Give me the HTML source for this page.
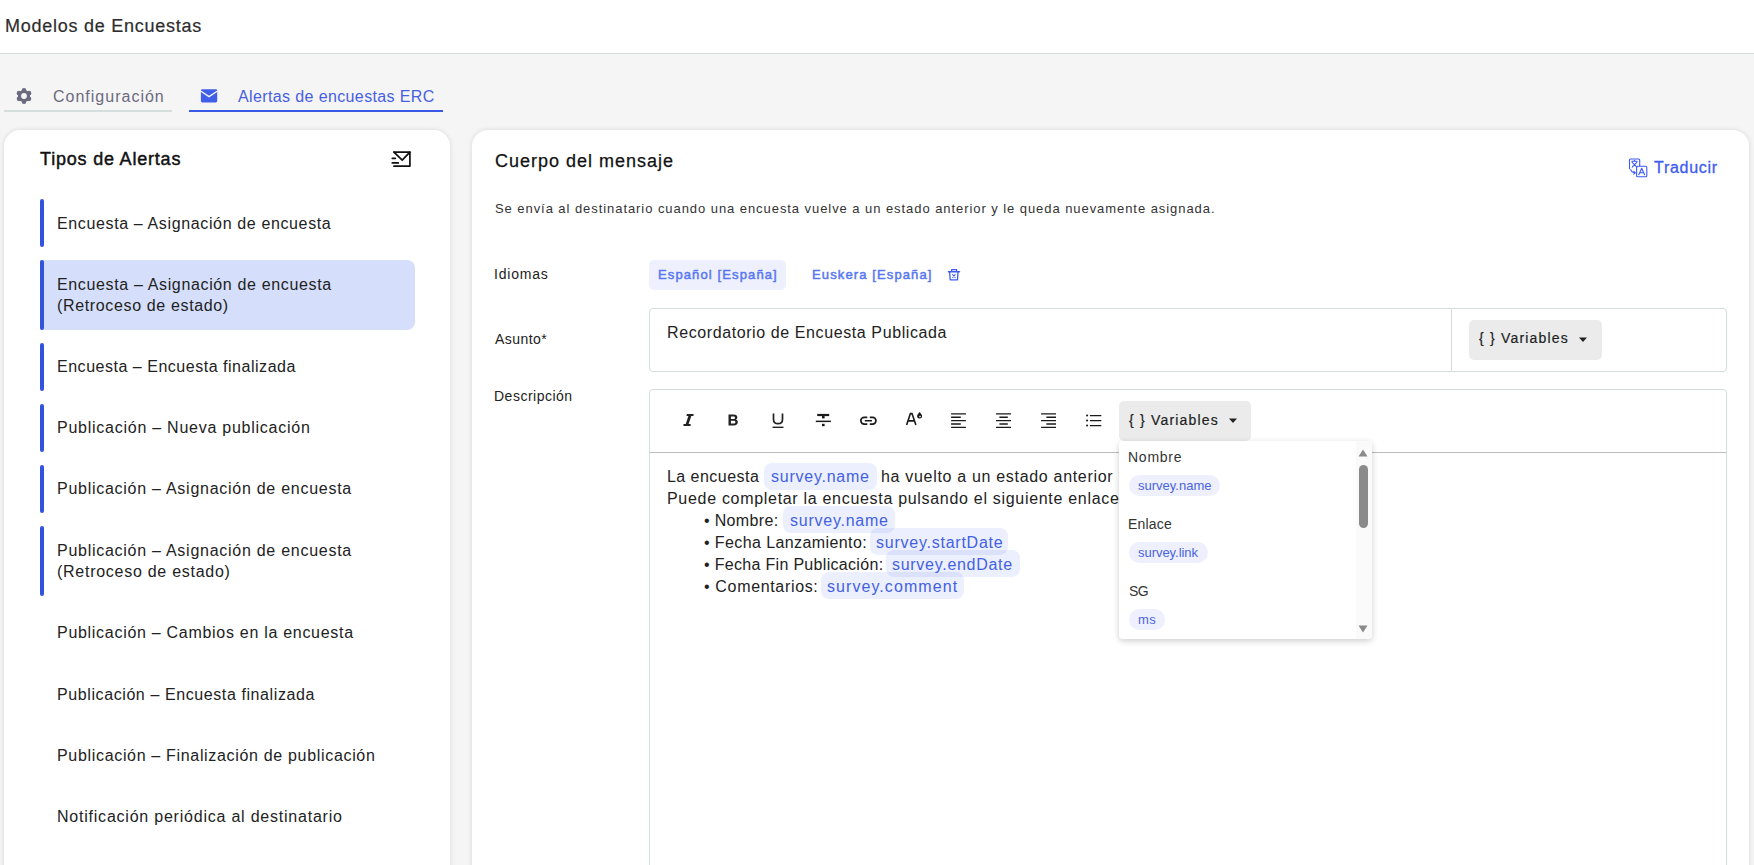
<!DOCTYPE html>
<html lang="es">
<head>
<meta charset="utf-8">
<title>Modelos de Encuestas</title>
<style>
*{box-sizing:border-box;margin:0;padding:0}
html,body{width:1754px;height:865px;overflow:hidden}
body{background:#f5f5f5;font-family:"Liberation Sans",sans-serif;position:relative;color:#222}
.a{position:absolute;white-space:nowrap}
#hdr{position:absolute;left:0;top:0;width:1754px;height:54px;background:#fff;border-bottom:1px solid #d3dcdc}
#title{left:5px;top:15px;font-size:18px;color:#2d2d2d;line-height:22px}
.tabline{position:absolute;height:2px;top:110px}
.card{position:absolute;background:#fff;border-radius:16px;box-shadow:0 0 5px rgba(0,0,0,.12)}
.item{position:absolute;left:40px;width:375px;border-radius:0 8px 8px 0}
.item .bar{position:absolute;left:0;top:0;bottom:0;width:4px;background:#3453db;border-radius:3px}
.item .t{position:absolute;left:17px;font-size:16px;color:#222;line-height:21px;white-space:nowrap}
.sel{background:#d5dffb}
.lbl{font-size:14px;color:#222}
.chip{position:absolute;background:rgba(98,122,240,.12);border-radius:8px}
.ct{color:#4361e4}
.tb svg{position:absolute}
</style>
</head>
<body>
<div id="hdr"></div>
<div class="a" id="title" style="letter-spacing:0.75px;-webkit-text-stroke:0.2px #2d2d2d">Modelos de Encuestas</div>

<!-- tabs -->
<svg class="a" style="left:14px;top:84px" width="20" height="24" viewBox="-10 -12 20 24"><g fill="#6c6a7e"><circle cx="0" cy="0" r="6.1"/><circle cx="0.00" cy="-5.75" r="2.3"/><circle cx="4.98" cy="-2.87" r="2.3"/><circle cx="4.98" cy="2.87" r="2.3"/><circle cx="0.00" cy="5.75" r="2.3"/><circle cx="-4.98" cy="2.87" r="2.3"/><circle cx="-4.98" cy="-2.87" r="2.3"/></g><circle cx="0" cy="0" r="2.9" fill="#f5f5f5"/></svg>
<div class="a" style="left:53px;top:87px;font-size:16px;color:#6c6a7e;line-height:19px;letter-spacing:1.0px">Configuración</div>
<div class="tabline" style="left:4px;width:168px;background:#d6dddd"></div>
<svg class="a" style="left:199px;top:87px" width="21" height="18" viewBox="0 0 21 18"><rect x="1.9" y="2.3" width="16.3" height="13.2" rx="1.4" fill="#3f5fe8"/><path d="M1.6 4 10.05 9.6 18.5 4" fill="none" stroke="#f5f5f5" stroke-width="1.35"/></svg>
<div class="a" style="left:238px;top:87px;font-size:16px;color:#4660e2;line-height:19px;letter-spacing:0.378px">Alertas de encuestas ERC</div>
<div class="tabline" style="left:189px;width:254px;background:#3a58e6"></div>

<!-- left card -->
<div class="card" style="left:4px;top:130px;width:446px;height:760px"></div>
<div class="a" style="left:40px;top:148px;font-size:18px;color:#111;line-height:22px;letter-spacing:0.8px;-webkit-text-stroke:0.45px #111">Tipos de Alertas</div>
<svg class="a" style="left:388px;top:146px" width="26" height="26" viewBox="0 0 26 26"><g fill="none" stroke="#111" stroke-width="1.7" stroke-linecap="round" stroke-linejoin="round"><path d="M5.9 6.1H21.9V20.1H5.9"/><path d="M5.9 6.1 14.2 14.1 21.9 6.1"/><path d="M4.3 12.3H7.3M4.3 16.9H10.3"/></g></svg>

<div class="item" style="top:199px;height:48px"><div class="bar"></div><div class="t" style="top:14px;letter-spacing:0.632px">Encuesta – Asignación de encuesta</div></div>
<div class="item sel" style="top:260px;height:70px"><div class="bar"></div><div class="t" style="top:14px;letter-spacing:0.644px">Encuesta – Asignación de encuesta<br>(Retroceso de estado)</div></div>
<div class="item" style="top:343px;height:48px"><div class="bar"></div><div class="t" style="top:13px;letter-spacing:0.521px">Encuesta – Encuesta finalizada</div></div>
<div class="item" style="top:404px;height:48px"><div class="bar"></div><div class="t" style="top:13px;letter-spacing:0.747px">Publicación – Nueva publicación</div></div>
<div class="item" style="top:465px;height:48px"><div class="bar"></div><div class="t" style="top:13px;letter-spacing:0.731px">Publicación – Asignación de encuesta</div></div>
<div class="item" style="top:526px;height:70px"><div class="bar"></div><div class="t" style="top:14px;letter-spacing:0.731px">Publicación – Asignación de encuesta<br>(Retroceso de estado)</div></div>
<div class="item" style="top:609px;height:48px"><div class="t" style="top:13px;letter-spacing:0.709px">Publicación – Cambios en la encuesta</div></div>
<div class="item" style="top:670px;height:48px"><div class="t" style="top:14px;letter-spacing:0.594px">Publicación – Encuesta finalizada</div></div>
<div class="item" style="top:731px;height:48px"><div class="t" style="top:14px;letter-spacing:0.675px">Publicación – Finalización de publicación</div></div>
<div class="item" style="top:792px;height:48px"><div class="t" style="top:14px;letter-spacing:0.778px">Notificación periódica al destinatario</div></div>

<!-- right card -->
<div class="card" style="left:472px;top:130px;width:1277px;height:760px"></div>

<div class="a" style="left:495px;top:151px;font-size:18px;color:#111;line-height:20px;letter-spacing:1.0px;-webkit-text-stroke:0.25px #111">Cuerpo del mensaje</div>
<svg class="a" style="left:1627px;top:157px" width="22" height="22" viewBox="0 0 22 22"><g fill="none" stroke="#3d5af1" stroke-width="1.1" stroke-linecap="round" stroke-linejoin="round"><path d="M2.5 11.8V3a1 1 0 0 1 1-1h8.2a1 1 0 0 1 1 1v6"/><rect x="9.6" y="9.3" width="10.2" height="10.5" rx="1" fill="#fff"/><path d="M11.8 17.8 14.7 11.3 17.6 17.8M12.7 15.8h4"/><path d="M4.8 4.3h5.4M7.5 3.3v1M5.2 5.3l4.6 4.8M9.8 5.3 5.2 10.1"/><path d="M3.8 12.6c.4 2 1.9 3 4.4 3.2M6.8 14.3l1.6 1.5-1.6 1.4"/></g></svg>
<div class="a" style="left:1654px;top:158px;font-size:16px;color:#3d5af1;line-height:19px;letter-spacing:0.72px;-webkit-text-stroke:0.3px #3d5af1">Traducir</div>
<div class="a" style="left:495px;top:201px;font-size:13px;color:#333;line-height:15px;letter-spacing:0.937px">Se envía al destinatario cuando una encuesta vuelve a un estado anterior y le queda nuevamente asignada.</div>

<div class="a lbl" style="left:494px;top:266px;line-height:16px;letter-spacing:0.783px">Idiomas</div>
<div class="a" style="left:649px;top:260px;width:137px;height:30px;background:#eef0fd;border-radius:5px"></div>
<div class="a" style="left:658px;top:267px;font-size:13px;color:#5877f2;line-height:16px;letter-spacing:1.12px;-webkit-text-stroke:0.5px #5877f2">Español [España]</div>
<div class="a" style="left:812px;top:267px;font-size:13px;color:#5877f2;line-height:16px;letter-spacing:1.12px;-webkit-text-stroke:0.5px #5877f2">Euskera [España]</div>
<svg class="a" style="left:942px;top:264px" width="24" height="22" viewBox="0 0 24 22"><g fill="none" stroke="#3d5af1" stroke-linecap="round" stroke-linejoin="round"><path d="M9.6 7.3V5.6H14.6V7.3" stroke-width="1.2"/><path d="M6.4 7.7H17.5" stroke-width="1.5"/><path d="M7.6 8 8.2 15.8H15.5L16 8" stroke-width="1.3"/><path d="M10.7 10.7 13.1 13.3M13.1 10.7 10.7 13.3" stroke-width="1.1"/></g></svg>

<div class="a lbl" style="left:495px;top:331px;line-height:16px;letter-spacing:0.45px">Asunto*</div>
<div class="a" style="left:649px;top:308px;width:1078px;height:64px;border:1px solid #d3dcdc;border-radius:4px;background:#fff"></div>
<div class="a" style="left:1451px;top:309px;width:1px;height:62px;background:#d3dcdc"></div>
<div class="a" style="left:667px;top:323px;font-size:16px;color:#222;line-height:19px;letter-spacing:0.597px">Recordatorio de Encuesta Publicada</div>
<div class="a" style="left:1469px;top:320px;width:133px;height:40px;background:#ebebeb;border-radius:5px"></div>
<div class="a" style="left:1479px;top:330px;font-size:14px;color:#222;line-height:17px;letter-spacing:1.2px;-webkit-text-stroke:0.2px #222">{ } Variables</div>
<svg class="a" style="left:1578px;top:337px" width="10" height="6" viewBox="0 0 10 6"><path d="M1 .5h8L5 5z" fill="#222"/></svg>

<div class="a lbl" style="left:494px;top:388px;line-height:16px;letter-spacing:0.5px">Descripción</div>
<div class="a" style="left:649px;top:389px;width:1078px;height:520px;border:1px solid #d3dcdc;border-radius:4px;background:#fff"></div>
<div class="a" style="left:650px;top:452px;width:1076px;height:1px;background:#bdbdbd"></div>

<!-- toolbar -->
<svg class="a" style="left:682px;top:413px" width="13" height="14" viewBox="0 0 13 14"><path d="M5 1h6.5v2H9.3L6.6 11h2v2H1.5v-2h2.2L6.4 3H4.4z" fill="#222"/></svg>
<svg class="a" style="left:727px;top:413px" width="13" height="14" viewBox="0 0 13 14"><path d="M1.5 1.5h5.2c2.3 0 3.6 1 3.6 2.8 0 1.1-.6 1.9-1.5 2.3 1.2.3 2 1.3 2 2.6 0 2-1.5 3.2-3.8 3.2H1.5zM3.9 3.4v2.6h2.6c1 0 1.5-.5 1.5-1.3s-.5-1.3-1.5-1.3zM3.9 7.8v2.8h2.8c1.1 0 1.7-.5 1.7-1.4s-.6-1.4-1.7-1.4z" fill="#222"/></svg>
<svg class="a" style="left:771px;top:412px" width="14" height="17" viewBox="0 0 14 17"><path d="M2.5 1.5v6c0 2.6 1.7 4.2 4.5 4.2s4.5-1.6 4.5-4.2v-6" fill="none" stroke="#222" stroke-width="1.7"/><path d="M1.5 15.3h11" stroke="#222" stroke-width="1.4"/></svg>
<svg class="a" style="left:810px;top:405px" width="24" height="24" viewBox="0 0 24 24"><g fill="#1a1a1a"><rect x="7.2" y="8.9" width="12" height="2.2"/><rect x="12" y="11" width="2.6" height="2.4"/><rect x="5.8" y="15.6" width="15.1" height="1.5"/><rect x="12" y="18.8" width="2.6" height="2.4"/></g></svg>
<svg class="a" style="left:855px;top:410px" width="26" height="20" viewBox="0 0 26 20"><g fill="none" stroke="#1a1a1a" stroke-width="1.7"><path d="M12.3 7.45H9.15a3.3 3.3 0 0 0 0 6.6H12.3M14.8 7.45H17.65a3.3 3.3 0 0 1 0 6.6H14.8"/><path d="M9.8 10.75H17" stroke-width="1.5"/></g></svg>
<svg class="a" style="left:900px;top:405px" width="26" height="24" viewBox="0 0 26 24"><path d="M6.6 19.9 10.4 8.6h1.6l3.9 11.3M8.3 15.9h5.9" fill="none" stroke="#1a1a1a" stroke-width="1.6"/><path d="M19.6 7.1c-1.5 1.6-2.5 2.9-2.5 4a2.5 2.5 0 0 0 5 0c0-1.1-1-2.4-2.5-4z" fill="#1a1a1a"/><circle cx="20" cy="11.6" r=".8" fill="#fff"/></svg>
<svg class="a" style="left:945px;top:405px" width="165" height="30" viewBox="0 0 165 30"><path d="M6.1 8.90H20.9M6.1 12.25H15.8M6.1 15.60H20.9M6.1 18.95H15.8M6.1 22.30H20.9M51.0 8.90H66.0M54.4 12.25H62.8M51.0 15.60H66.0M54.4 18.95H62.8M51.0 22.30H66.0M96.1 8.90H111.0M101.4 12.25H111.0M96.1 15.60H111.0M101.4 18.95H111.0M96.1 22.30H111.0" stroke="#1a1a1a" stroke-width="1.35" fill="none"/><g fill="#1a1a1a"><circle cx="142.1" cy="10.5" r="1.05"/><circle cx="142.1" cy="15.5" r="1.05"/><circle cx="142.1" cy="20.5" r="1.05"/></g><path d="M144.9 10.5H156.3M144.9 15.5H156.3M144.9 20.5H156.3" stroke="#1a1a1a" stroke-width="1.25"/></svg>
<div class="a" style="left:1119px;top:401px;width:132px;height:40px;background:#ebebeb;border-radius:5px"></div>
<div class="a" style="left:1129px;top:412px;font-size:14px;color:#222;line-height:17px;letter-spacing:1.2px;-webkit-text-stroke:0.2px #222">{ } Variables</div>
<svg class="a" style="left:1228px;top:418px" width="10" height="6" viewBox="0 0 10 6"><path d="M1 .5h8L5 5z" fill="#222"/></svg>

<!-- editor content -->
<div class="chip" style="left:764px;top:463px;width:113px;height:27px"></div>
<div class="chip" style="left:783px;top:506px;width:112px;height:27px"></div>
<div class="chip" style="left:870px;top:528px;width:138px;height:27px"></div>
<div class="chip" style="left:886px;top:550px;width:134px;height:27px"></div>
<div class="chip" style="left:821px;top:572px;width:143px;height:27px"></div>
<div class="a" style="left:667px;top:467px;font-size:16px;color:#222;line-height:19px;letter-spacing:0.46px">La encuesta</div>
<div class="a ct" style="left:771px;top:467px;font-size:16px;line-height:19px;letter-spacing:0.75px">survey.name</div>
<div class="a" style="left:881px;top:467px;font-size:16px;color:#222;line-height:19px;letter-spacing:0.686px">ha vuelto a un estado anterior</div>
<div class="a" style="left:667px;top:489px;font-size:16px;color:#222;line-height:19px;letter-spacing:0.695px">Puede completar la encuesta pulsando el siguiente enlace</div>
<div class="a" style="left:704px;top:511px;font-size:16px;color:#222;line-height:19px;letter-spacing:0.337px">• Nombre:</div>
<div class="a ct" style="left:790px;top:511px;font-size:16px;line-height:19px;letter-spacing:0.75px">survey.name</div>
<div class="a" style="left:704px;top:533px;font-size:16px;color:#222;line-height:19px;letter-spacing:0.4px">• Fecha Lanzamiento:</div>
<div class="a ct" style="left:876px;top:533px;font-size:16px;line-height:19px;letter-spacing:0.76px">survey.startDate</div>
<div class="a" style="left:704px;top:555px;font-size:16px;color:#222;line-height:19px;letter-spacing:0.313px">• Fecha Fin Publicación:</div>
<div class="a ct" style="left:892px;top:555px;font-size:16px;line-height:19px;letter-spacing:0.715px">survey.endDate</div>
<div class="a" style="left:704px;top:577px;font-size:16px;color:#222;line-height:19px;letter-spacing:0.662px">• Comentarios:</div>
<div class="a ct" style="left:827px;top:577px;font-size:16px;line-height:19px;letter-spacing:1.069px">survey.comment</div>

<!-- dropdown -->
<div class="a" style="left:1119px;top:441px;width:253px;height:198px;background:#fff;border-radius:4px;box-shadow:0 2px 6px rgba(0,0,0,.2)"></div>
<div class="a" style="left:1356px;top:441px;width:16px;height:198px;background:#fafafa;border-radius:0 4px 4px 0"></div>
<div class="a" style="left:1359px;top:465px;width:9px;height:63px;background:#8a8a8a;border-radius:5px"></div>
<svg class="a" style="left:1358px;top:449px" width="10" height="8" viewBox="0 0 10 8"><path d="M5 .5 9.5 7.5H.5z" fill="#8a8a8a"/></svg>
<svg class="a" style="left:1358px;top:625px" width="10" height="8" viewBox="0 0 10 8"><path d="M.5.5h9L5 7.5z" fill="#8a8a8a"/></svg>
<div class="a" style="left:1128px;top:449px;font-size:14px;color:#333;line-height:16px;letter-spacing:0.74px">Nombre</div>
<div class="a" style="left:1129px;top:475px;width:91px;height:21px;background:#eef0fd;border-radius:11px"></div>
<div class="a" style="left:1138px;top:478px;font-size:13px;color:#4a63e0;line-height:15px">survey.name</div>
<div class="a" style="left:1128px;top:516px;font-size:14px;color:#333;line-height:16px;letter-spacing:0.18px">Enlace</div>
<div class="a" style="left:1129px;top:542px;width:79px;height:21px;background:#eef0fd;border-radius:11px"></div>
<div class="a" style="left:1138px;top:545px;font-size:13px;color:#4a63e0;line-height:15px;letter-spacing:-0.04px">survey.link</div>
<div class="a" style="left:1129px;top:583px;font-size:14px;color:#333;line-height:16px;letter-spacing:-0.6px">SG</div>
<div class="a" style="left:1129px;top:609px;width:36px;height:21px;background:#eef0fd;border-radius:11px"></div>
<div class="a" style="left:1138px;top:612px;font-size:13px;color:#4a63e0;line-height:15px;letter-spacing:0.4px">ms</div>
</body>
</html>
